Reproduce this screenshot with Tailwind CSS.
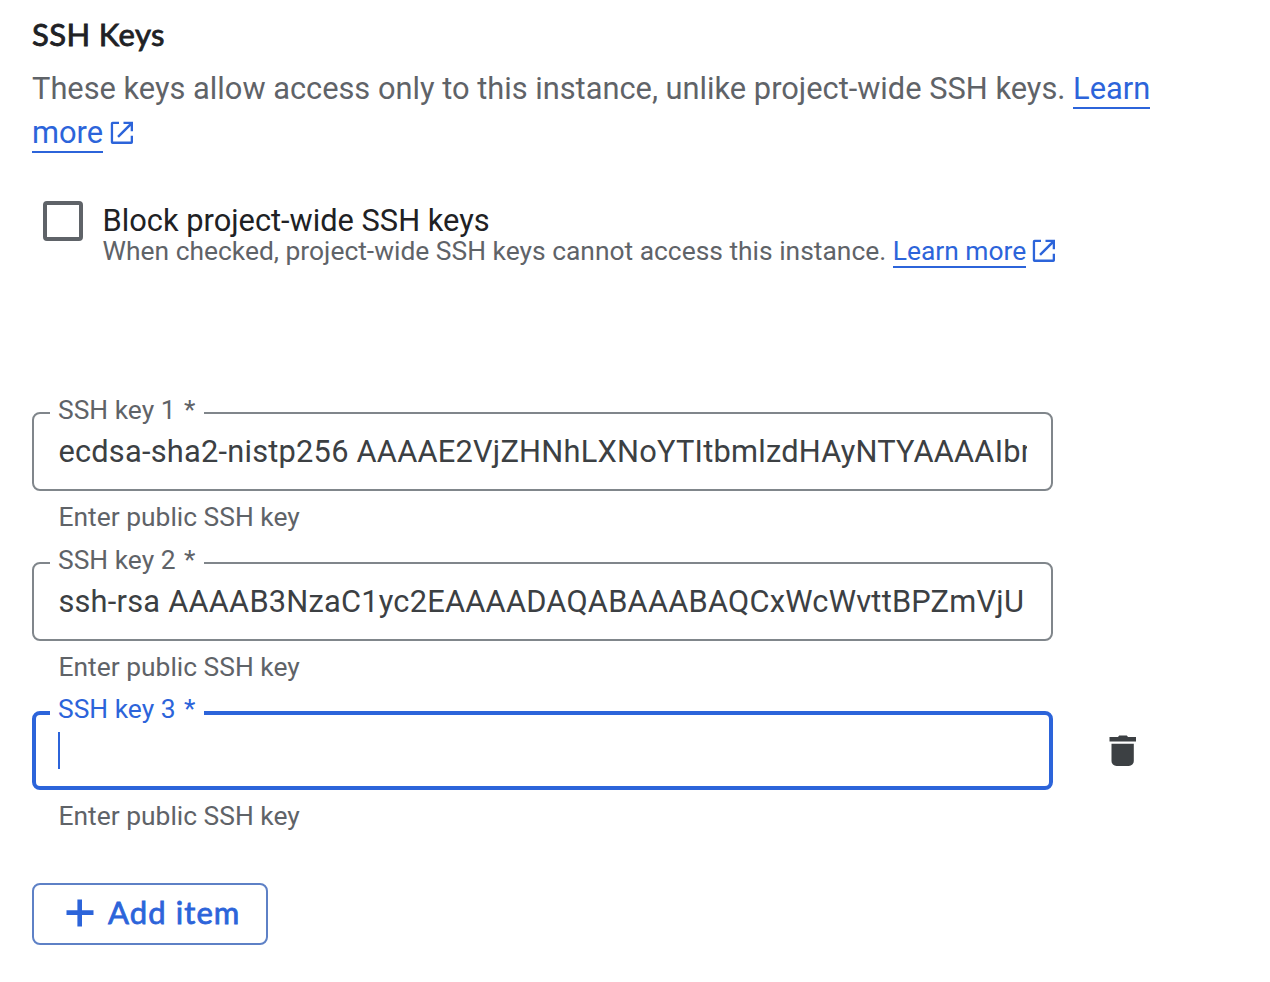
<!DOCTYPE html>
<html lang="en">
<head>
<meta charset="utf-8">
<title>SSH Keys</title>
<script src="https://cdn.jsdelivr.net/npm/@tailwindcss/browser@4"></script>
</head>
<body class="bg-white font-[Roboto,sans-serif] text-[#5f6368]">
<svg class="hidden">
  <symbol id="ext" viewBox="0 0 24 24"><path fill="currentColor" d="M2.600 0.800H9V3.100H3.100V20.600H20.700V14.800H23V21.200Q23 22.900 21.300 22.900H2.600Q0.800 22.900 0.800 21.200V2.500Q0.800 0.800 2.600 0.800ZM13.500 0.800H23V10.200H20.700V4.900L8.900 16.700 7.200 15 19.100 3.100H13.500Z"/></symbol>
</svg>
<main class="flex h-[982px] flex-col items-start overflow-hidden pl-8 pt-[14px]">
  <h1 class="h-10 whitespace-nowrap font-[Lato,sans-serif] text-[31px]/[40px] font-normal tracking-[0.4px] text-[#202124] [-webkit-text-stroke:0.8px]">SSH Keys</h1>
  <p class="mt-[13px] whitespace-nowrap text-[30.8px]/[44px]">These keys allow access only to this instance, unlike project-wide SSH keys. <a class="border-b-2 border-[#2c64da] text-[#2c64da]">Learn</a><br><a class="border-b-2 border-[#2c64da] text-[#2c64da]">more</a><svg class="ml-[7px] inline-block size-6 align-[-2px] text-[#2c64da]"><use href="#ext"/></svg></p>
  <div class="mt-[46px] flex pl-[11px]">
    <div class="size-10 rounded-[4px] border-4 border-[#5f6368]"></div>
    <div class="ml-[19.6px] whitespace-nowrap">
      <div class="h-[34px] text-[30.8px]/[40px] text-[#202124]">Block project-wide SSH keys</div>
      <div class="text-[26.4px]/[32px]">When checked, project-wide SSH keys cannot access this instance. <a class="border-b-2 border-[#2c64da] text-[#2c64da]">Learn more</a><svg class="ml-[5.500px] inline-block size-6 align-[-3px] text-[#2c64da]"><use href="#ext"/></svg></div>
    </div>
  </div>

  <div class="mt-[131px] w-[1021px]">
    <fieldset class="h-[93px] w-full min-w-0 rounded-lg border-2 border-[#80868b] pl-4 pr-[24px]">
      <legend class="h-[30px] w-[154px] whitespace-nowrap pl-2 text-[26.4px]/[24px]">SSH key 1<span class="ml-[2px]"> *</span></legend>
      <div class="ml-[8.400px] mt-[2px] overflow-hidden whitespace-nowrap text-[30.8px]/[44px] tracking-[0.22px] text-[#3c4043]">ecdsa-sha2-nistp256 AAAAE2VjZHNhLXNoYTItbmlzdHAyNTYAAAAIbm</div>
    </fieldset>
    <div class="ml-[26.500px] mt-[10px] text-[26.4px]/[32px]">Enter public SSH key</div>
  </div>
  <div class="mt-[15px] w-[1021px]">
    <fieldset class="h-[93px] w-full min-w-0 rounded-lg border-2 border-[#80868b] pl-4 pr-[24px]">
      <legend class="h-[30px] w-[154px] whitespace-nowrap pl-2 text-[26.4px]/[24px]">SSH key 2<span class="ml-[2px]"> *</span></legend>
      <div class="ml-[8.400px] mt-[2px] overflow-hidden whitespace-nowrap text-[30.8px]/[44px] tracking-[0.22px] text-[#3c4043]">ssh-rsa AAAAB3NzaC1yc2EAAAADAQABAAABAQCxWcWvttBPZmVjU</div>
    </fieldset>
    <div class="ml-[26.500px] mt-[10px] text-[26.4px]/[32px]">Enter public SSH key</div>
  </div>
  <div class="mt-[15px] flex">
    <div class="w-[1021px]">
      <fieldset class="h-[92px] w-full rounded-lg border-4 border-[#2c64da] pl-[14px]">
        <legend class="h-[30px] w-[154px] whitespace-nowrap pl-2 text-[26.4px]/[22px] text-[#2c64da]">SSH key 3<span class="ml-[2px]"> *</span></legend>
        <div class="ml-2 mt-[4px] h-[37px] w-[2px] bg-[#2c64da]"></div>
      </fieldset>
      <div class="ml-[26.500px] mt-[10px] text-[26.4px]/[32px]">Enter public SSH key</div>
    </div>
    <svg class="ml-[56px] mt-[36px] h-8 w-7 text-[#3c4043]" viewBox="0 0 28 32"><path fill="currentColor" d="M0.500 3h8.500l1.200-1.500h7.600l1.200 1.500h8v4.500H0.500zM2.500 9.700h22.300v17.200a5 5 0 0 1-5 5H7.500a5 5 0 0 1-5-5z"/></svg>
  </div>
  <button class="mt-[51px] flex h-[62px] w-[236px] items-center rounded-lg border-2 border-[#5e81c6] pb-[4px] pl-8 font-[Lato,sans-serif] text-[31px] font-normal tracking-[1.1px] text-[#2c64da]">
    <svg class="mt-[2px] size-7" viewBox="0 0 28 28"><path d="M13.700 0.500v27M0.500 13.600h27" stroke="currentColor" stroke-width="4.600"/></svg>
    <span class="ml-[14px] whitespace-nowrap [-webkit-text-stroke:0.8px]">Add item</span>
  </button>
</main>
</body>
</html>
